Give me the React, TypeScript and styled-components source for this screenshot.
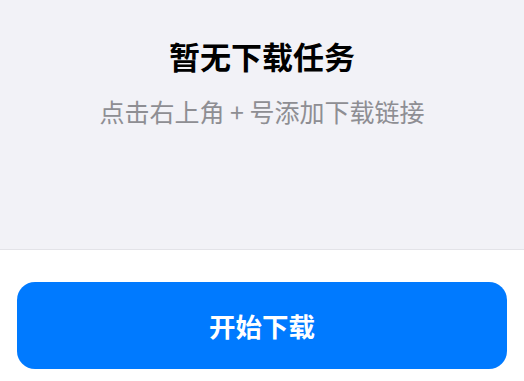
import styled, { createGlobalStyle } from 'styled-components';

const GlobalStyle = createGlobalStyle`
  html, body {
    margin: 0;
    padding: 0;
    background: #ffffff;
  }
  body {
    font-family: "Noto Sans CJK SC", "Noto Sans", sans-serif;
  }
`;

const Page = styled.div`
  display: flex;
  flex-direction: column;
  width: 524px;
  height: 381px;
  overflow: hidden;
`;

const EmptyArea = styled.section`
  display: flex;
  flex-direction: column;
  align-items: center;
  height: 249px;
  background: #f2f2f7;
  border-bottom: 1px solid #e3e3e8;
  box-sizing: content-box;
`;

const Title = styled.h2`
  margin: 36px 0 0;
  font-size: 31px;
  line-height: 40px;
  font-weight: 700;
  color: #000000;
`;

const Hint = styled.p`
  margin: 19px 0 0;
  font-size: 25px;
  line-height: 32px;
  font-weight: 400;
  color: #8e8e93;
`;

const Footer = styled.div`
  display: flex;
  padding: 32px 17px 0;
`;

const PrimaryButton = styled.button`
  flex: 1;
  height: 87px;
  border: none;
  border-radius: 18px;
  background: #007aff;
  color: #ffffff;
  font-family: inherit;
  font-size: 26.5px;
  font-weight: 600;
  cursor: pointer;
`;

export default function App() {
  return (
    <>
      <GlobalStyle />
      <Page>
        <EmptyArea>
          <Title>暂无下载任务</Title>
          <Hint>点击右上角 + 号添加下载链接</Hint>
        </EmptyArea>
        <Footer>
          <PrimaryButton>开始下载</PrimaryButton>
        </Footer>
      </Page>
    </>
  );
}
